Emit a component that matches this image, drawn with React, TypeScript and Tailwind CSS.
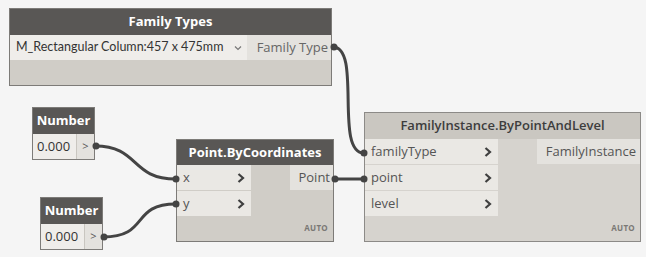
import React from 'react';

const font = { fontFamily: '"Open Sans", "Noto Sans", sans-serif' };

const Chevron = () => (
  <svg width="8" height="10" viewBox="0 0 8 10" className="shrink-0">
    <path d="M1.5 1 L6 5 L1.5 9" fill="none" stroke="#3f3f3f" strokeWidth="2.2" />
  </svg>
);

const InputRow: React.FC<{ label: string }> = ({ label }) => (
  <div className="h-[25px] flex items-center justify-between pl-[6px] pr-[6px] bg-[#eae8e4] text-[13px] text-[#555] whitespace-nowrap">
    <span>{label}</span>
    <Chevron />
  </div>
);

const Auto = () => (
  <div className="absolute right-[5px] bottom-[7px] text-[8px] font-bold text-[#7a7875] tracking-[0.3px]">AUTO</div>
);

const NumberNode: React.FC<{ pos: string }> = ({ pos }) => (
  <div className={`absolute ${pos} w-[63px] h-[53px] border border-[#7d7b78] bg-[#d0cdc7] flex flex-col`}>
    <div className="h-[26px] bg-[#595755] text-white text-[13px] font-bold flex items-center justify-center">Number</div>
    <div className="flex-1 flex">
      <div className="w-[43px] bg-[#efedea] flex items-center pl-[4px] text-[13px] text-[#333]">0.000</div>
      <div className="flex-1 bg-[#e4e2de] border-l border-[#c9c6c0] flex items-center justify-center text-[11px] text-[#555]">&gt;</div>
    </div>
  </div>
);

export default function App() {
  return (
    <div className="relative w-[646px] h-[257px] bg-[#f5f5f5] overflow-hidden" style={font}>
      {/* Family Types */}
      <div className="absolute left-[9px] top-[8px] w-[323px] h-[78px] border border-[#7d7b78] bg-[#d0cdc7] flex flex-col">
        <div className="h-[26px] bg-[#595755] text-white text-[13px] font-bold flex items-center justify-center">Family Types</div>
        <div className="h-[25px] flex">
          <div className="w-[237px] bg-[#efedea] flex items-center justify-between pl-[6px] pr-[5px] text-[12.5px] text-[#333] whitespace-nowrap">
            <span style={{ fontFamily: 'Lato, "Open Sans", sans-serif' }}>M_Rectangular Column:457 x 475mm</span>
            <svg width="8" height="6" viewBox="0 0 8 6">
              <path d="M1 1.5 L4 4.5 L7 1.5" fill="none" stroke="#777" strokeWidth="1.2" />
            </svg>
          </div>
          <div className="flex-1 bg-[#e4e2de] flex items-center justify-end pr-[3px] text-[13px] text-[#666] whitespace-nowrap">Family Type</div>
        </div>
      </div>

      <NumberNode pos="left-[32px] top-[107px]" />
      <NumberNode pos="left-[40px] top-[197px]" />

      {/* Point.ByCoordinates */}
      <div className="absolute left-[176px] top-[139px] w-[158px] h-[103px] border border-[#7d7b78] bg-[#d0cdc7] flex flex-col">
        <div className="h-[25px] bg-[#595755] text-white text-[13px] font-bold flex items-center justify-center">Point.ByCoordinates</div>
        <div className="flex">
          <div className="w-[74px] flex flex-col gap-[1px]">
            <InputRow label="x" />
            <InputRow label="y" />
          </div>
          <div className="flex-1 flex justify-end">
            <div className="h-[25px] w-[43px] bg-[#e4e2de] flex items-center justify-end pr-[3px] text-[13px] text-[#555]">Point</div>
          </div>
        </div>
        <Auto />
      </div>

      {/* FamilyInstance.ByPointAndLevel */}
      <div className="absolute left-[364px] top-[112px] w-[277px] h-[130px] border border-[#8c8a87] bg-[#d6d3ce] flex flex-col">
        <div className="h-[26px] bg-[#cac7c1] text-[#3d3d3d] text-[13px] font-semibold flex items-center justify-center">FamilyInstance.ByPointAndLevel</div>
        <div className="flex">
          <div className="w-[133px] flex flex-col gap-[1px]">
            <InputRow label="familyType" />
            <InputRow label="point" />
            <InputRow label="level" />
          </div>
          <div className="flex-1 flex justify-end">
            <div className="h-[25px] w-[103px] bg-[#e4e2de] flex items-center justify-end pr-[4px] text-[13px] text-[#555]">FamilyInstance</div>
          </div>
        </div>
        <Auto />
      </div>

      {/* wires */}
      <svg className="absolute left-0 top-0 pointer-events-none" width="646" height="257">
        <g fill="none" stroke="#444" strokeWidth="3" strokeLinecap="round">
          <path d="M333 47 C 362 47, 334 153, 364 153" />
          <path d="M95 146 C 140 146, 130 179, 176 179" />
          <path d="M103 237 C 150 237, 130 204, 176 204" />
          <path d="M334 179 L 364 179" />
        </g>
        <g fill="#444">
          <circle cx="334" cy="47" r="3.5" />
          <circle cx="364" cy="153" r="3.5" />
          <circle cx="96" cy="146" r="3.5" />
          <circle cx="176" cy="179" r="3.5" />
          <circle cx="104" cy="237" r="3.5" />
          <circle cx="176" cy="204" r="3.5" />
          <circle cx="335" cy="179" r="3.5" />
          <circle cx="364" cy="179" r="3.5" />
        </g>
      </svg>
    </div>
  );
}
